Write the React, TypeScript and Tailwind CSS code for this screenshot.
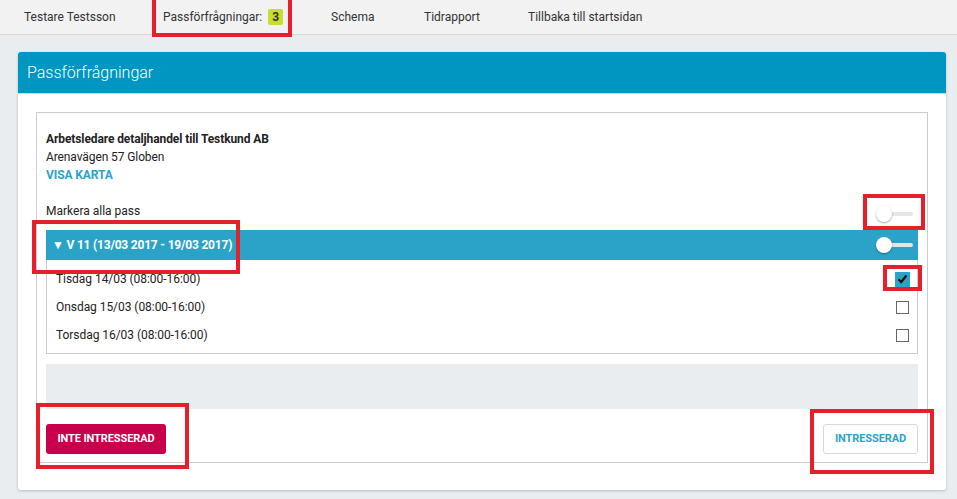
import React from 'react';

const navItems = [
    { label: 'Testare Testsson', w: 'w-[139px]' },
    { label: 'Passförfrågningar:', w: 'w-[168px]', badge: '3' },
    { label: 'Schema', w: 'w-[93px]' },
    { label: 'Tidrapport', w: 'w-[104px]' },
    { label: 'Tillbaka till startsidan', w: '' },
];

const shifts = [
    { label: 'Tisdag 14/03 (08:00-16:00)', checked: true },
    { label: 'Onsdag 15/03 (08:00-16:00)', checked: false },
    { label: 'Torsdag 16/03 (08:00-16:00)', checked: false },
];

function Toggle({ onBlue }: { onBlue?: boolean }) {
    return (
        <div className="relative w-[37px] h-[16px]">
            <div className={`absolute left-[8px] right-0 top-[6px] h-[4px] rounded-full ${onBlue ? 'bg-[#e3e6e8]' : 'bg-[#e6e6e6]'}`} />
            <div className="absolute left-0 top-0 w-[16px] h-[16px] rounded-full bg-white shadow-[0_1px_2px_rgba(0,0,0,0.35)]" />
        </div>
    );
}

function Checkbox({ checked }: { checked: boolean }) {
    if (checked) {
        return (
            <div className="w-[15px] h-[15px] bg-[#2ba3c9] flex items-center justify-center">
                <svg width="11" height="10" viewBox="0 0 11 10">
                    <path d="M1.5 5.2 L4.2 8 L9.5 1.5" fill="none" stroke="#111" strokeWidth="2.2" />
                </svg>
            </div>
        );
    }
    return <div className="w-[13px] h-[13px] border border-[#666] bg-white mr-[1px]" />;
}

function RedBox({ className }: { className: string }) {
    return <div className={`absolute border-[4px] border-[#e5202b] pointer-events-none ${className}`} />;
}

export default function App() {
    return (
        <div className="relative w-[957px] h-[499px] overflow-hidden bg-[#e9edf0] text-[#222]" style={{ fontFamily: 'Roboto, "Liberation Sans", sans-serif' }}>
            {/* top nav */}
            <div className="h-[35px] bg-[#f2f2f2] border-b border-[#d6d6d6] flex items-center pl-[24px] text-[12px] text-[#333]">
                {navItems.map(item => (
                    <div key={item.label} className={`flex items-center ${item.w}`}>
                        <span>{item.label}</span>
                        {item.badge && (
                            <span className="ml-[6px] px-[4px] h-[16px] leading-[16px] rounded-[2px] bg-[#c8dc35] font-bold text-[#333]">{item.badge}</span>
                        )}
                    </div>
                ))}
            </div>

            {/* card */}
            <div className="ml-[18px] mt-[17px] w-[928px] bg-white rounded-[3px] shadow-[0_1px_3px_rgba(0,0,0,0.2)] pb-[27px]">
                <div className="h-[41px] bg-[#0096c2] rounded-t-[3px] flex items-center pl-[9px] text-white text-[16px] font-light">
                    Passförfrågningar
                </div>
                <div className="h-[1px] bg-[#bfe0ec]" />
                <div className="px-[18px] pt-[18px]">
                    <div className="border border-[#cccccc] px-[9px] pt-[17px] pb-[8px]">
                        <div className="text-[12px] leading-[18px] tracking-[-0.1px]">
                            <div className="font-bold">Arbetsledare detaljhandel till Testkund AB</div>
                            <div>Arenavägen 57 Globen</div>
                            <div className="font-bold text-[#2ba3c9]">VISA KARTA</div>
                        </div>
                        <div className="mt-[18px] h-[24px] flex items-center justify-between pr-[5px]">
                            <span className="text-[12px] -mt-[6px]">Markera alla pass</span>
                            <Toggle />
                        </div>
                        <div className="mt-[4px] h-[30px] bg-[#2ba3c9] flex items-center justify-between pl-[6px] pr-[5px] text-white text-[12px] font-bold tracking-[-0.2px]">
                            <span>▼ V 11 (13/03 2017 - 19/03 2017)</span>
                            <Toggle onBlue />
                        </div>
                        <div className="border-x border-b border-[#cccccc] pt-[5px] pb-[4px]">
                            {shifts.map(s => (
                                <div key={s.label} className="h-[28px] flex items-center justify-between pl-[9px] pr-[7px] text-[12px] tracking-[-0.05px]">
                                    <span>{s.label}</span>
                                    <Checkbox checked={s.checked} />
                                </div>
                            ))}
                        </div>
                        <div className="mt-[10px] h-[45px] bg-[#e9edf0]" />
                        <div className="mt-[15px] flex justify-between">
                            <button className="h-[30px] w-[120px] rounded-[3px] bg-[#c8004b] text-white text-[11px] font-bold tracking-[-0.1px]">INTE INTRESSERAD</button>
                            <button className="h-[30px] w-[95px] rounded-[3px] bg-white border border-[#d9d9d9] text-[#2ba3c9] text-[11px] font-bold tracking-[-0.1px]">INTRESSERAD</button>
                        </div>
                    </div>
                </div>
            </div>

            {/* annotation boxes */}
            <RedBox className="left-[152px] top-[-4px] w-[140px] h-[41px]" />
            <RedBox className="left-[32px] top-[220px] w-[208px] h-[54px]" />
            <RedBox className="left-[863px] top-[194px] w-[62px] h-[36px]" />
            <RedBox className="left-[883px] top-[265px] w-[39px] h-[26px]" />
            <RedBox className="left-[36px] top-[403px] w-[153px] h-[66px]" />
            <RedBox className="left-[810px] top-[409px] w-[124px] h-[65px]" />
        </div>
    );
}
